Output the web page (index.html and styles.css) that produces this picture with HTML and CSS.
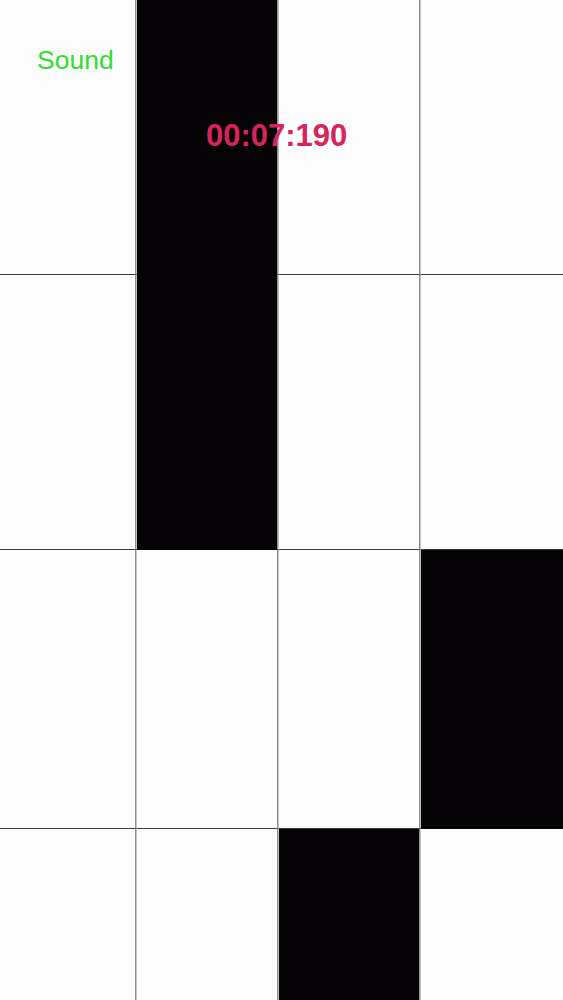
FILE: index.html
```html
<!DOCTYPE html>
<html>
<head>
<meta charset="utf-8">
<link rel="stylesheet" href="styles.css">
</head>
<body>
<div class="board">
  <div class="grid">
    <div class="cell"></div><div class="cell black join"></div><div class="cell"></div><div class="cell"></div>
    <div class="cell"></div><div class="cell black"></div><div class="cell"></div><div class="cell"></div>
    <div class="cell"></div><div class="cell"></div><div class="cell"></div><div class="cell black"></div>
    <div class="cell"></div><div class="cell"></div><div class="cell black"></div><div class="cell"></div>
  </div>
  <div class="sound">Sound</div>
  <div class="timer">00:07:190</div>
</div>
</body>
</html>
```
FILE: styles.css
```css
html, body {
  margin: 0;
  padding: 0;
  background: #fff;
}
.board {
  position: relative;
  width: 563px;
  height: 1000px;
  overflow: hidden;
  font-family: "Liberation Sans", Arial, sans-serif;
}
.grid {
  display: grid;
  grid-template-columns: 136px 142px 142px 143px;
  grid-template-rows: 275px 275px 279px 240px;
}
.cell {
  box-sizing: border-box;
  background: #fdfdfd;
  border-left: 1px solid #c4c4c4;
  border-right: 1px solid #8e8e8e;
  border-bottom: 1px solid #3c3c3c;
}
.cell:nth-child(4n+1) {
  border-left: none;
}
.cell:nth-child(4n) {
  border-right: none;
}
.cell.black {
  background: #050306;
  border-bottom-color: #050306;
}
.sound {
  position: absolute;
  left: 37px;
  top: 47px;
  font-size: 26.5px;
  line-height: 1;
  color: #2fdf2f;
}
.timer {
  position: absolute;
  left: 206px;
  top: 120px;
  font-size: 31px;
  line-height: 1;
  font-weight: bold;
  color: #d8245a;
}
```
